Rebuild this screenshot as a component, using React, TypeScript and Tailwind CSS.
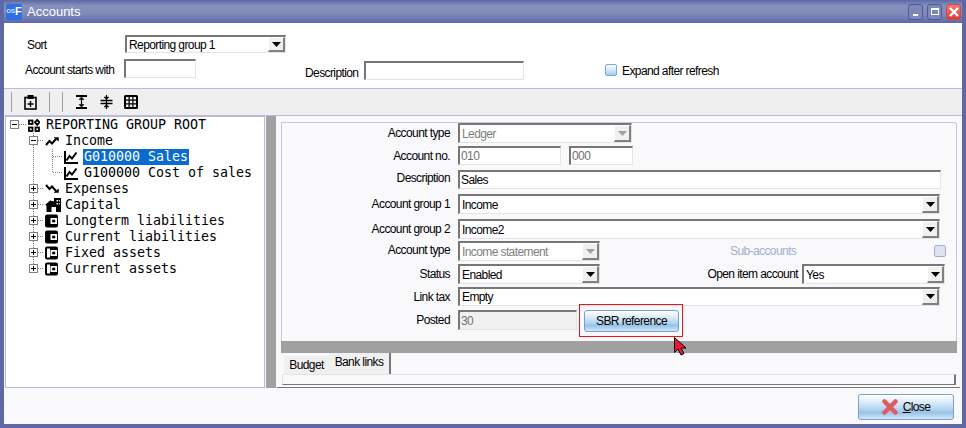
import React from "react";

const sunken =
  "border-t-2 border-l-2 border-b border-r border-t-[#777777] border-l-[#777777] border-b-[#e3e3e3] border-r-[#e3e3e3]";
const ui = "font-['Liberation_Sans',Arial,sans-serif] text-[12px] tracking-[-0.6px]";

const ComboArrow: React.FC<{ disabled?: boolean }> = ({ disabled }) => (
  <span className="w-[17px] self-stretch shrink-0 flex items-center justify-center bg-[#f0f0f0] border-t border-l border-t-white border-l-white border-b-2 border-r-2 border-b-[#808080] border-r-[#808080]">
    <svg width="9" height="5" viewBox="0 0 9 5">
      <path d="M0 0h9L4.500 5z" fill={disabled ? "#a0a0a0" : "#000"} />
    </svg>
  </span>
);

const Combo: React.FC<{ value: string; className: string; disabled?: boolean }> = ({ value, className, disabled }) => (
  <div className={`${sunken} flex items-center justify-between bg-white pl-[2px] ${disabled ? "text-[#808080]" : "text-black"} ${className}`}>
    <span>{value}</span>
    <ComboArrow disabled={disabled} />
  </div>
);

const Input: React.FC<{ value?: string; className: string; disabled?: boolean; bg?: string }> = ({ value, className, disabled, bg }) => (
  <div className={`${sunken} flex items-center pl-[1px] ${bg ?? "bg-white"} ${disabled ? "text-[#707070]" : "text-black"} ${className}`}>
    {value}
  </div>
);

const FormRow: React.FC<{ label: string; className: string; labelClass?: string; children: React.ReactNode }> = ({
  label,
  className,
  labelClass,
  children,
}) => (
  <div className={`flex items-center ${className}`}>
    <span className={`w-[168px] mr-[8px] text-right shrink-0 ${labelClass ?? ""}`}>{label}</span>
    {children}
  </div>
);

// Tree icons
const RootIcon = () => (
  <svg width="12" height="13" viewBox="0 0 12 13" fill="none" stroke="#000" strokeWidth="1.800">
    <rect x="1" y="1.500" width="3.500" height="3.500" />
    <rect x="1" y="8.500" width="3.500" height="3.500" />
    <rect x="7.500" y="8.500" width="3.500" height="3.500" />
    <path d="M9.200 0.800l2.300 2.500-2.300 2.500-2.300-2.500z" />
  </svg>
);
const UpIcon = () => (
  <svg width="14" height="12" viewBox="0 0 14 12" fill="none" stroke="#000" strokeWidth="2">
    <path d="M1 10l3.500-4 2.500 2.500 4-4.500" />
    <path d="M9 2.500h4.500v3.500z" fill="#000" strokeWidth="0.500" />
  </svg>
);
const DownIcon = () => (
  <svg width="14" height="12" viewBox="0 0 14 12" fill="none" stroke="#000" strokeWidth="2">
    <path d="M1 2l3.500 4 2.500-2.500 4 4.500" />
    <path d="M9 9.500h4.500V6z" fill="#000" strokeWidth="0.500" />
  </svg>
);
const ChartIcon = () => (
  <svg width="14" height="14" viewBox="0 0 14 14" fill="none" stroke="#000">
    <path d="M1 1v12h13" strokeWidth="2" />
    <path d="M2.500 10.500l3-4.500 2.500 2.500 4.500-6" strokeWidth="2" />
  </svg>
);
const HouseIcon = () => (
  <svg width="16" height="14" viewBox="0 0 16 14">
    <path d="M0 7L5 2.500l4 1V0h7v14h-5V9H6.500v5H1.500V7.500z" fill="#000" />
    <path d="M11.500 2h1.500v1.500h-1.500zM13.800 2h1v1.500h-1zM11.500 5h1.500v1.500h-1.500zM13.800 5h1v1.500h-1z" fill="#fff" />
  </svg>
);
const WalletIcon: React.FC<{ hollow?: boolean }> = ({ hollow }) => (
  <svg width="13" height="14" viewBox="0 0 13 14">
    <rect x="0" y="0.500" width="13" height="13" rx="2" fill="#000" />
    {hollow && <rect x="2" y="2.500" width="3" height="9" fill="#fff" />}
    <rect x="5.500" y="4" width="6.500" height="6" fill="#fff" />
    <rect x="7.200" y="5.700" width="3" height="2.600" fill="#000" />
  </svg>
);

const Expander: React.FC<{ x: number; open: boolean }> = ({ x, open }) => (
  <g>
    <rect x={x - 3.5} y="3.500" width="8" height="8" fill="#fff" stroke="#7f7f7f" />
    <path d={`M${x - 2} 7.500h5`} stroke="#000" />
    {!open && <path d={`M${x + 0.5} 5v5`} stroke="#000" />}
  </g>
);

// Dotted guide lines and expander for one tree row, drawn in page x coordinates
const TreeRow: React.FC<{
  level: 0 | 1 | 2;
  open?: boolean;
  last?: boolean;
  lastChild?: boolean;
  icon: React.ReactNode;
  label: string;
  selected?: boolean;
}> = ({ level, open, last, lastChild, icon, label, selected }) => {
  const width = level === 0 ? 22 : level === 1 ? 39 : 58;
  const dots = { stroke: "#808080", strokeDasharray: "1 1" };
  return (
    <div className="flex items-center h-[16px]">
      <svg width={width} height="16" viewBox={`6 0 ${width} 16`} className="shrink-0">
        {level === 0 && <path d="M19 7.500h8" {...dots} />}
        {level === 0 && <path d="M33.500 12v4" {...dots} />}
        {level >= 1 && <path d={`M33.500 0v${last ? 8 : 16}`} {...dots} />}
        {level === 1 && <path d="M38 7.500h6" {...dots} />}
        {level === 2 && <path d={`M52.500 0v${lastChild ? 8 : 16}`} {...dots} />}
        {level === 2 && <path d="M53 7.500h10" {...dots} />}
        {level === 0 && <Expander x={14} open />}
        {level === 1 && <Expander x={33} open={!!open} />}
      </svg>
      <span className={`flex items-center shrink-0 ${level === 0 ? "w-[17px]" : "w-[19px]"}`}>{icon}</span>
      <span
        className={`font-['DejaVu_Sans_Mono',monospace] text-[13.3px] tracking-normal leading-[16px] px-[1px] ${
          selected ? "bg-[#0a6ccf] text-white" : "text-black"
        }`}
      >
        {label}
      </span>
    </div>
  );
};

const glossy =
  "bg-[linear-gradient(180deg,#ffffff_0%,#dcebf7_30%,#aed2ee_62%,#94c3e8_72%,#d3e6f5_100%)] border border-[#7a9fc9] rounded-[3px]";

const App: React.FC = () => {
  return (
    <div className={`w-[966px] h-[428px] flex flex-col bg-[#f9f9fc] border-x-4 border-b-4 border-[#5d68a5] text-black overflow-hidden ${ui}`}>
      {/* title bar */}
      <div className="h-[23px] -mx-[4px] shrink-0 flex items-center pl-[6px] pr-[5px] bg-[linear-gradient(180deg,#5c69a5_0%,#8690bd_25%,#7f8ab9_60%,#5d69a6_100%)]">
        <span className="w-[16px] h-[16px] mr-[5px] rounded-[2px] bg-[#2f6fe0] flex items-center justify-center text-white font-bold tracking-normal">
          <span className="text-[6px] text-[#dfe6ff]">OS</span>
          <span className="text-[11px]">F</span>
        </span>
        <span className="text-white text-[13px] tracking-normal">Accounts</span>
        <div className="ml-auto flex gap-[4px]">
          <span className="w-[15px] h-[16px] rounded-[3px] border border-[#4f5a96] bg-[#7d88b8] flex items-end justify-center pb-[3px]">
            <span className="w-[5px] h-[2px] bg-white" />
          </span>
          <span className="w-[15px] h-[16px] rounded-[3px] border border-[#4f5a96] bg-[#7d88b8] flex items-center justify-center">
            <span className="w-[8px] h-[7px] border border-t-2 border-white" />
          </span>
          <span className="w-[15px] h-[16px] rounded-[3px] border border-[#c05050] bg-[linear-gradient(180deg,#f77a70,#e03a3a)] flex items-center justify-center">
            <svg width="10" height="10" viewBox="0 0 10 10">
              <path d="M1 1l8 8M9 1l-8 8" stroke="#fff" strokeWidth="2.400" />
            </svg>
          </span>
        </div>
      </div>

      {/* filters */}
      <div className="h-[65px] shrink-0 bg-white flex flex-col">
        <div className="flex items-center mt-[12px] h-[18px]">
          <span className="ml-[23px] w-[98px] pt-[2px]">Sort</span>
          <Combo value="Reporting group 1" className="w-[161px] h-[18px]" />
        </div>
        <div className="flex items-start mt-[6px]">
          <span className="ml-[21px] w-[99px] mt-[2px]">Account starts with</span>
          <Input className="w-[72px] h-[19px]" />
          <span className="ml-[109px] w-[59px] mt-[5px]">Description</span>
          <Input className="w-[160px] h-[19px] mt-[2px]" />
          <span className="ml-[81px] mt-[5px] w-[12px] h-[12px] rounded-[2px] border border-[#7aa8d8] bg-[linear-gradient(180deg,#ffffff,#a8cdec)]" />
          <span className="ml-[5px] mt-[3px]">Expand after refresh</span>
        </div>
      </div>

      {/* toolbar */}
      <div className="h-[28px] shrink-0 bg-[#efefef] border-t border-b border-[#b9bcda] flex items-center">
        <span className="ml-[7px] w-[1px] h-[20px] bg-[#a0a0a0]" />
        <svg className="ml-[12px]" width="13" height="15" viewBox="0 0 13 15" fill="none" stroke="#000">
          <rect x="1" y="2.500" width="11" height="11.500" strokeWidth="1.600" />
          <rect x="4" y="0.500" width="5" height="3" fill="#000" />
          <path d="M6.500 6v6M3.500 9h6" strokeWidth="1.400" />
        </svg>
        <span className="ml-[12px] w-[1px] h-[20px] bg-[#a0a0a0]" />
        <span className="ml-[12px] w-[1px] h-[20px] bg-[#a0a0a0]" />
        <svg className="ml-[12px]" width="13" height="14" viewBox="0 0 13 14" fill="none" stroke="#000">
          <path d="M1 1h11M1 13h11" strokeWidth="2" />
          <path d="M6.500 3v8" strokeWidth="1.200" />
          <path d="M4 4.500L6.500 2 9 4.500zM4 9.500L6.500 12 9 9.500z" fill="#000" strokeWidth="0.500" />
        </svg>
        <svg className="ml-[12px]" width="13" height="14" viewBox="0 0 13 14" fill="none" stroke="#000">
          <path d="M0.500 5.500h12M0.500 8.500h12" strokeWidth="1.400" />
          <path d="M6.500 0v14" strokeWidth="1.200" />
          <path d="M4 2l2.500 2.500L9 2zM4 12l2.500-2.500L9 12z" fill="#000" strokeWidth="0.500" />
        </svg>
        <svg className="ml-[11px]" width="14" height="14" viewBox="0 0 14 14">
          <rect width="14" height="14" rx="1.500" fill="#000" />
          <path d="M2 2h2.500v2.500H2zM5.800 2h2.500v2.500H5.800zM9.500 2H12v2.500H9.500zM2 5.800h2.500v2.500H2zM5.800 5.800h2.500v2.500H5.800zM9.500 5.800H12v2.500H9.500zM2 9.500h2.500V12H2zM5.800 9.500h2.500V12H5.800zM9.500 9.500H12V12H9.500z" fill="#efefef" />
        </svg>
      </div>

      {/* main */}
      <div className="h-[272px] shrink-0 flex">
        <div className="ml-[1px] w-[260px] bg-white border border-[#b6b9d8]">
          <TreeRow level={0} icon={<RootIcon />} label="REPORTING GROUP ROOT" />
          <TreeRow level={1} open icon={<UpIcon />} label="Income" />
          <TreeRow level={2} icon={<ChartIcon />} label="G010000 Sales" selected />
          <TreeRow level={2} lastChild icon={<ChartIcon />} label="G100000 Cost of sales" />
          <TreeRow level={1} icon={<DownIcon />} label="Expenses" />
          <TreeRow level={1} icon={<HouseIcon />} label="Capital" />
          <TreeRow level={1} icon={<WalletIcon />} label="Longterm liabilities" />
          <TreeRow level={1} icon={<WalletIcon />} label="Current liabilities" />
          <TreeRow level={1} icon={<WalletIcon hollow />} label="Fixed assets" />
          <TreeRow level={1} last icon={<WalletIcon hollow />} label="Current assets" />
        </div>
        <div className="ml-[1px] w-[10px] bg-[#a0a0a0]" />
        <div className="ml-[1px] w-[683px] flex flex-col border-b border-[#777777]">
          <div className="ml-[4px] mr-[3px] mt-[6px] h-[219px] shrink-0 border border-b-0 border-[#c3c7e0] rounded-tr-[3px]">
            <FormRow label="Account type" className="h-[20px]">
              <Combo value="Ledger" disabled className="w-[174px] h-[20px]" />
            </FormRow>
            <FormRow label="Account no." className="h-[19px] mt-[3px]">
              <Input value="010" disabled className="w-[103px] h-[19px]" />
              <Input value="000" disabled className="w-[64px] h-[19px] ml-[8px]" />
            </FormRow>
            <FormRow label="Description" labelClass="mb-[4px]" className="h-[19px] mt-[5px]">
              <Input value="Sales" className="w-[483px] h-[19px]" />
            </FormRow>
            <FormRow label="Account group 1" className="h-[20px] mt-[5px]">
              <Combo value="Income" className="w-[482px] h-[20px]" />
            </FormRow>
            <FormRow label="Account group 2" className="h-[20px] mt-[5px]">
              <Combo value="Income2" className="w-[482px] h-[20px]" />
            </FormRow>
            <FormRow label="Account type" labelClass="mb-[2px]" className="h-[20px] mt-[2px]">
              <Combo value="Income statement" disabled className="w-[142px] h-[20px]" />
              <span className="ml-[130px] text-[#a5acd4]">Sub-accounts</span>
              <span className="ml-auto mr-[10px] w-[12px] h-[12px] rounded-[2px] border border-[#a5acd4] bg-[#dfe2f0]" />
            </FormRow>
            <FormRow label="Status" className="h-[20px] mt-[3px]">
              <Combo value="Enabled" className="w-[142px] h-[20px]" />
              <span className="ml-auto mr-[4px]">Open item account</span>
              <Combo value="Yes" className="w-[143px] h-[20px] mr-[11px]" />
            </FormRow>
            <FormRow label="Link tax" className="h-[19px] mt-[3px]">
              <Combo value="Empty" className="w-[482px] h-[19px]" />
            </FormRow>
            <FormRow label="Posted" className="h-[20px] mt-[4px]">
              <Input value="30" disabled bg="bg-[#f0f0f0]" className="w-[119px] h-[20px]" />
              <div className="relative self-start shrink-0 -mt-[6px] ml-[2px] w-[104px] h-[33px] border border-[#e8141c] pl-[4px] pt-[5px]">
                <button className={`w-[95px] h-[22px] flex items-center justify-center text-[12px] ${glossy}`}>
                  SBR reference
                </button>
                <svg className="absolute left-[94px] top-[32px]" width="13" height="19" viewBox="0 0 13 19">
                  <path d="M0.500 0.500v15l3.500-3.500 3 6 3-1.500-3-5.500h5z" fill="#f0143c" stroke="#000" />
                </svg>
              </div>
            </FormRow>
          </div>
          <div className="mx-[4px] mr-[3px] h-[12px] shrink-0 bg-[#a0a0a0]" />
          <div className="ml-[4px] mr-[3px] h-[21px] shrink-0 flex items-end pl-[3px]">
            <span className="w-[45px] h-[18px] bg-[#f0f0f0] flex items-center justify-center">Budget</span>
            <span className="w-[62px] h-[21px] bg-[#f0f0f0] border-r-2 border-[#777777] flex items-center justify-center pb-[4px]">
              Bank links
            </span>
          </div>
          <div className="ml-[5px] mr-[4px] h-[11px] shrink-0 border-t border-l border-[#e3e3e3] border-r-2 border-r-[#777777] border-b border-b-[#777777]" />
        </div>
      </div>

      {/* footer */}
      <div className="flex-1 flex justify-end items-start pt-[6px] pr-[8px]">
        <button className={`w-[96px] h-[26px] flex items-center justify-center gap-[5px] text-[12px] ${glossy}`}>
          <svg width="16" height="16" viewBox="0 0 16 16">
            <path d="M2.500 2.500l11 11M13.500 2.500l-11 11" stroke="#e05a62" strokeWidth="4.500" strokeLinecap="round" />
          </svg>
          <span>
            <span className="underline">C</span>lose
          </span>
        </button>
      </div>
    </div>
  );
};

export default App;
